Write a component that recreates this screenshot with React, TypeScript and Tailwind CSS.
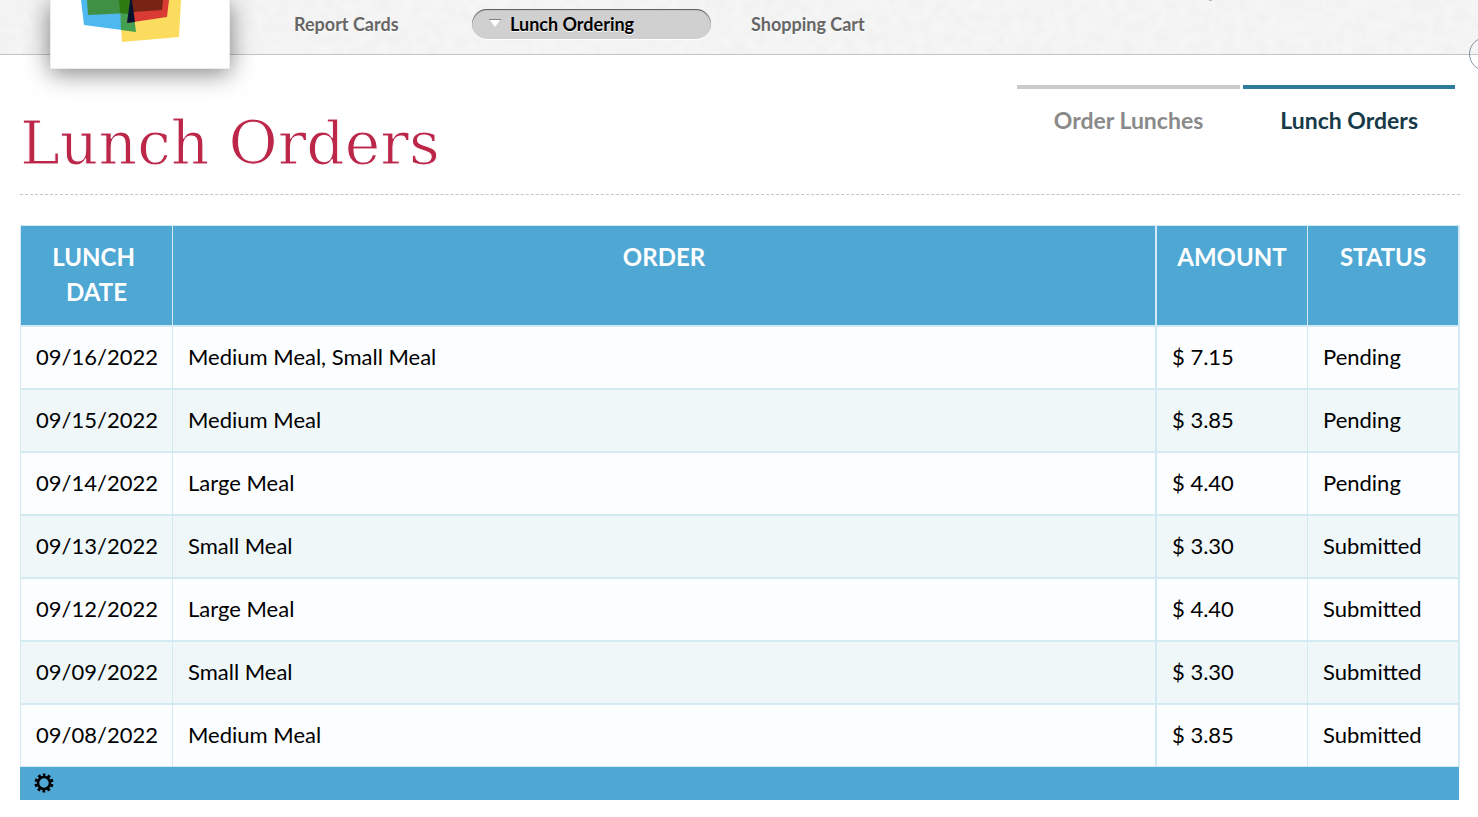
type Order = {
  date: string;
  items: string;
  amount: string;
  status: string;
};

const orders: Order[] = [
  { date: "09/16/2022", items: "Medium Meal, Small Meal", amount: "$ 7.15", status: "Pending" },
  { date: "09/15/2022", items: "Medium Meal", amount: "$ 3.85", status: "Pending" },
  { date: "09/14/2022", items: "Large Meal", amount: "$ 4.40", status: "Pending" },
  { date: "09/13/2022", items: "Small Meal", amount: "$ 3.30", status: "Submitted" },
  { date: "09/12/2022", items: "Large Meal", amount: "$ 4.40", status: "Submitted" },
  { date: "09/09/2022", items: "Small Meal", amount: "$ 3.30", status: "Submitted" },
  { date: "09/08/2022", items: "Medium Meal", amount: "$ 3.85", status: "Submitted" },
];

function Logo() {
  return (
    <a
      href="#"
      aria-label="Home"
      className="absolute left-[50px] top-0 block h-[69px] w-[180px] border-x border-b border-[#ececec] bg-white shadow-[0_4px_24px_rgba(0,0,0,0.5)]"
    >
      <svg viewBox="51 0 178 68" className="block h-[68px] w-full">
        <path d="M120 0H181L179 37L122 42Z" fill="#fbdc5f" />
        <path d="M81 0H121L122 30L84 25Z" fill="#4fb8ee" />
        <path d="M120 0H132L136 32L121 30Z" fill="#42a050" />
        <path d="M131 0H169L167 17L127 23Z" fill="#d93a34" />
        <path d="M87 0H129V13L88 15Z" fill="#3f8f45" />
        <path d="M119 0H130L128 14L120 13Z" fill="#2d7a10" />
        <path d="M132 0H163L162 10L133 12Z" fill="#772414" />
        <path d="M130 0H132L135 22L127 23Z" fill="#06122c" />
      </svg>
    </a>
  );
}

function PaperTexture() {
  return (
    <svg className="absolute inset-0 h-full w-full" aria-hidden="true">
      <filter id="paper">
        <feTurbulence type="fractalNoise" baseFrequency="0.09" numOctaves="4" />
        <feColorMatrix values="0 0 0 0 0.5  0 0 0 0 0.5  0 0 0 0 0.5  0.14 0 0 0 -0.03" />
      </filter>
      <rect width="100%" height="100%" filter="url(#paper)" />
      <path d="M1209 0H1212" stroke="#777" />
    </svg>
  );
}

function Header() {
  return (
    <header className="relative border-b border-[#c4c4c4] bg-[#f6f6f6]">
      <PaperTexture />
      <nav className="relative flex h-[54px] items-start pl-[294px] pt-[9px] text-[18px] leading-[30px] font-bold text-[#666]">
        <a href="#" className="w-[178px] [text-shadow:0_1px_0_white]">
          Report Cards
        </a>
        <a
          href="#"
          className="flex w-[239px] items-center rounded-full bg-[#d0d0d0] pl-4 text-black shadow-[inset_0_1px_1px_#555,0_1px_0_white] [text-shadow:0_1px_0_white]"
        >
          <svg viewBox="0 0 14 10" className="mr-2 h-[10px] w-[14px]" aria-hidden="true">
            <path d="M1 0H13L7 8Z" fill="white" />
            <path d="M1 0.5H13" stroke="#808080" />
          </svg>
          Lunch Ordering
        </a>
        <a href="#" className="ml-10 [text-shadow:0_1px_0_white]">
          Shopping Cart
        </a>
      </nav>
      <Logo />
      <div className="absolute right-0 top-[37px] h-[34px] w-[9px] overflow-hidden">
        <button aria-label="Expand" className="block size-[34px] rounded-full border border-[#7f939c]" />
      </div>
    </header>
  );
}

function GearIcon() {
  return (
    <svg viewBox="0 0 20 20" className="size-5" aria-hidden="true">
      <g fill="none" stroke="black" transform="rotate(-90 10 10)">
        <circle cx="10" cy="10" r="8" strokeWidth="3" strokeDasharray="2.8 2.227" strokeDashoffset="1.4" />
        <circle cx="10" cy="10" r="6" strokeWidth="2.6" />
      </g>
    </svg>
  );
}

export default function App() {
  return (
    <div className="min-h-screen overflow-x-hidden bg-white font-['Lato',sans-serif] text-black">
      <Header />
      <main className="pl-5 pr-[18px]">
        <div className="flex items-start justify-between border-b border-dashed border-[#c4c4c4] pb-4 pt-[30px]">
          <h1 className="mt-6 font-['DejaVu_Serif',serif] text-[60px] leading-[69px] text-[#bb2649] [-webkit-text-stroke:1px_white]">
            Lunch Orders
          </h1>
          <nav className="mr-[5px] flex gap-[3px] text-[23px] leading-[30px] font-bold">
            <a href="#" className="border-t-4 border-[#c9caca] px-[37px] pt-4 text-[#8a8a8a]">
              Order Lunches
            </a>
            <a href="#" className="border-t-4 border-[#2f7b9b] px-[37px] pt-4 text-[#173a49]">
              Lunch Orders
            </a>
          </nav>
        </div>

        <table className="mt-[30px] w-full table-fixed border-separate border-spacing-0 text-left text-[22px] leading-[35px]">
          <colgroup>
            <col className="w-[153px]" />
            <col />
            <col className="w-[151px]" />
            <col className="w-[152px]" />
          </colgroup>
          <thead>
            <tr className="bg-[#4fa8d3] text-center align-top text-[24px] text-white uppercase *:border-t *:border-b-2 *:border-[#d3eaf2] *:pb-4 *:pt-[13px]">
              <th className="border-x">Lunch&nbsp; Date</th>
              <th className="border-r-2">Order</th>
              <th className="border-r">Amount</th>
              <th className="border-r-2">Status</th>
            </tr>
          </thead>
          <tbody>
            {orders.map((order) => (
              <tr
                key={order.date}
                className="bg-[#fcfdff] even:bg-[#eff7f9] *:border-b-2 *:border-[#d3eaf2] *:px-[15px] *:pb-[14px] *:pt-3 last:*:border-b"
              >
                <td className="border-x">{order.date}</td>
                <td className="border-r-2">{order.items}</td>
                <td className="border-r">{order.amount}</td>
                <td className="border-r-2">{order.status}</td>
              </tr>
            ))}
          </tbody>
        </table>
        <div className="mr-px flex bg-[#4fa8d3] pb-[7px] pl-[14px] pt-[6px]">
          <button aria-label="Table settings">
            <GearIcon />
          </button>
        </div>
      </main>
    </div>
  );
}
